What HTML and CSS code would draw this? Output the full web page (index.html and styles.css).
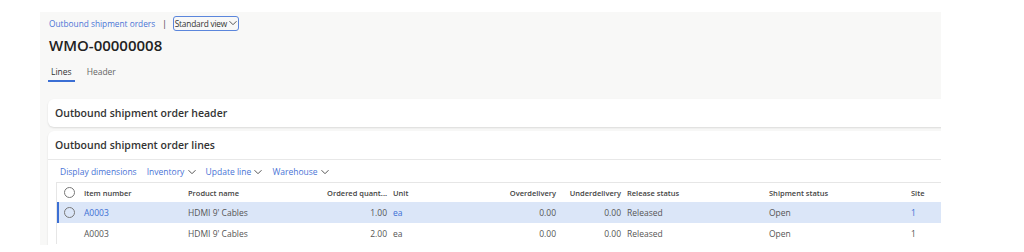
FILE: index.html
```html
<!DOCTYPE html>
<html lang="en">

<head>
    <meta charset="UTF-8">
    <meta name="viewport" content="width=device-width, initial-scale=1.0">
    <title>WMO-00000008</title>
    <link rel="stylesheet" href="styles.css">
</head>

<body>
    <div class="page">
        <div class="crumbs">
            <a class="crumb-link" href="#">Outbound shipment orders</a>
            <span class="crumb-sep">|</span>
            <span class="view-btn">Standard view
                <svg width="8" height="6" viewBox="0 0 8 6"><path d="M0.5 1.2 L4 4.7 L7.5 1.2" fill="none" stroke="#555" stroke-width="1"/></svg>
            </span>
        </div>
        <h1 class="title">WMO-00000008</h1>

        <div class="tabs">
            <span class="tab active">Lines</span>
            <span class="tab">Header</span>
        </div>

        <div class="card card-header">
            <h2>Outbound shipment order header</h2>
        </div>

        <div class="card card-lines">
            <h2>Outbound shipment order lines</h2>
            <div class="toolbar">
                <span class="tool">Display dimensions</span>
                <span class="tool">Inventory <svg width="8" height="6" viewBox="0 0 8 6"><path d="M0.5 1.2 L4 4.7 L7.5 1.2" fill="none" stroke="#555" stroke-width="1"/></svg></span>
                <span class="tool">Update line <svg width="8" height="6" viewBox="0 0 8 6"><path d="M0.5 1.2 L4 4.7 L7.5 1.2" fill="none" stroke="#555" stroke-width="1"/></svg></span>
                <span class="tool">Warehouse <svg width="8" height="6" viewBox="0 0 8 6"><path d="M0.5 1.2 L4 4.7 L7.5 1.2" fill="none" stroke="#555" stroke-width="1"/></svg></span>
            </div>

            <div class="grid">
                <div class="row head">
                    <span class="c-check"><i class="radio"></i></span>
                    <span class="c-item">Item number</span>
                    <span class="c-name">Product name</span>
                    <span class="c-qty">Ordered quant...</span>
                    <span class="c-unit">Unit</span>
                    <span class="c-over">Overdelivery</span>
                    <span class="c-under">Underdelivery</span>
                    <span class="c-rel">Release status</span>
                    <span class="c-ship">Shipment status</span>
                    <span class="c-site">Site</span>
                </div>
                <div class="row selected">
                    <span class="c-check"><i class="radio"></i></span>
                    <span class="c-item link">A0003</span>
                    <span class="c-name">HDMI 9' Cables</span>
                    <span class="c-qty">1.00</span>
                    <span class="c-unit link">ea</span>
                    <span class="c-over">0.00</span>
                    <span class="c-under">0.00</span>
                    <span class="c-rel">Released</span>
                    <span class="c-ship">Open</span>
                    <span class="c-site link">1</span>
                </div>
                <div class="row">
                    <span class="c-check"></span>
                    <span class="c-item">A0003</span>
                    <span class="c-name">HDMI 9' Cables</span>
                    <span class="c-qty">2.00</span>
                    <span class="c-unit">ea</span>
                    <span class="c-over">0.00</span>
                    <span class="c-under">0.00</span>
                    <span class="c-rel">Released</span>
                    <span class="c-ship">Open</span>
                    <span class="c-site">1</span>
                </div>
            </div>
        </div>
    </div>
</body>

</html>
```

FILE: styles.css
```css
* {
    margin: 0;
    padding: 0;
    box-sizing: border-box;
}

body {
    font-family: "Open Sans", "Noto Sans", sans-serif;
    background-color: #fff;
    color: #323130;
}

.page {
    margin: 12px 0 0 40px;
    width: 901px;
    height: 233px;
    background-color: #f8f8f7;
    padding: 3px 0 0 8px;
    overflow: hidden;
}

.crumbs {
    display: flex;
    align-items: center;
    height: 16px;
    font-size: 8.3px;
}

.crumb-link {
    color: #4a74d6;
    text-decoration: none;
    margin-left: 1px;
}

.crumb-sep {
    margin: 0 6px 0 7px;
    color: #333;
}

.view-btn {
    display: flex;
    align-items: center;
    gap: 2px;
    height: 15px;
    padding: 0 1px 0 1px;
    border: 1px solid #5b86dc;
    border-radius: 3px;
    color: #333;
    letter-spacing: -0.2px;
}

.title {
    font-size: 15px;
    font-weight: 600;
    margin-top: 5px;
    margin-left: 1px;
    line-height: 19px;
    color: #222;
}

.tabs {
    display: flex;
    gap: 9px;
    margin-top: 9px;
    font-size: 8.5px;
    height: 18px;
}

.tab {
    color: #666;
    padding: 0 3px;
    height: 18px;
    line-height: 15px;
}

.tab.active {
    color: #333;
    border-bottom: 2px solid #3b6fd4;
}

.card {
    background-color: #fff;
    border-radius: 6px;
    margin-right: -12px;
    box-shadow: 0 1px 2px rgba(0, 0, 0, 0.12);
}

.card h2 {
    font-size: 10.5px;
    font-weight: 600;
    color: #333;
    padding-left: 7px;
}

.card-header {
    margin-top: 17px;
    height: 28px;
}

.card-header h2 {
    line-height: 28px;
}

.card-lines {
    margin-top: 4px;
    height: 130px;
}

.card-lines h2 {
    line-height: 28px;
    border-bottom: 1px solid #e8e8e8;
}

.toolbar {
    display: flex;
    gap: 10px;
    height: 22px;
    align-items: center;
    padding-left: 12px;
    font-size: 8.5px;
    color: #4a74d6;
}

.tool svg {
    margin-left: 1px;
}

.grid {
    margin-left: 8px;
    border-top: 1px solid #e6e6e6;
    border-left: 1px solid #e6e6e6;
    font-size: 8.5px;
    color: #555;
}

.row {
    display: flex;
    align-items: center;
    height: 21px;
}

.row.head {
    height: 19px;
    font-size: 7.5px;
    font-weight: 600;
    color: #444;
}

.row.selected {
    background-color: #dbe6f8;
    box-shadow: inset 2px 0 0 #3b6fd4;
}

.link {
    color: #3b6fd4;
}

.radio {
    display: block;
    width: 11px;
    height: 11px;
    border: 1px solid #777;
    border-radius: 50%;
}

.c-check {
    width: 27px;
    padding-left: 7px;
}

.c-item {
    width: 104px;
}

.c-name {
    width: 105px;
}

.c-qty {
    width: 94px;
    text-align: right;
}

.c-unit {
    width: 40px;
    padding-left: 6px;
}

.c-over {
    width: 129px;
    text-align: right;
}

.c-under {
    width: 65px;
    text-align: right;
}

.c-rel {
    width: 148px;
    padding-left: 6px;
}

.c-ship {
    width: 142px;
}

.c-site {
    width: 40px;
}
```
